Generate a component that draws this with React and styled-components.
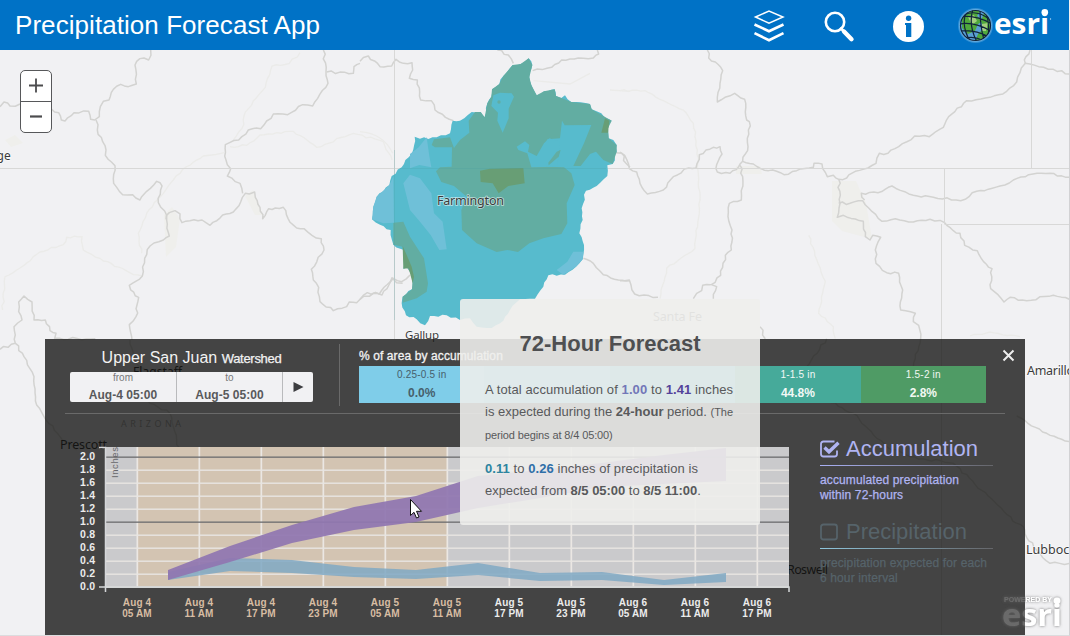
import React from 'react';
import styled, { createGlobalStyle } from 'styled-components';

const Global = createGlobalStyle`
  * { box-sizing: border-box; }
  body { margin: 0; background: #f1f1f3; font-family: "Liberation Sans", Arial, sans-serif; overflow: hidden; }
`;

const Page = styled.div`
  width: 1070px;
  height: 636px;
  display: flex;
  flex-direction: column;
  background: #f1f1f3;
`;
const Header = styled.header`
  height: 50px;
  width: 1069px;
  flex: none;
  display: flex;
  align-items: center;
  padding: 0 17px 0 15px;
  background: #0072c6;
  color: #fff;
`;
const AppTitle = styled.h1`
  margin: 0;
  flex: 1;
  font-size: 26px;
  font-weight: 400;
  line-height: 50px;
  letter-spacing: 0.06px;
  white-space: nowrap;
`;
const Tools = styled.div`
  display: flex;
  align-items: center;
  svg { display: block; }
`;
const Tool = styled.span`
  width: ${p => p.$w}px;
  height: 50px;
`;
const MapArea = styled.main`
  position: relative;
  flex: 1;
  overflow: hidden;
  border-right: 1px solid #d2d2d4;
  border-bottom: 1px solid #dcdcde;
`;
const MapSvg = styled.svg`
  position: absolute;
  left: 0;
  top: 0;
`;
const Zoomer = styled.div`
  position: absolute;
  left: 20px;
  top: 20px;
  width: 32px;
  height: 63px;
  display: flex;
  flex-direction: column;
  border: 1px solid #57585a;
  border-radius: 5px;
  background: #fff;
`;
const ZoomButton = styled.button`
  flex: 1;
  border: 0;
  padding: 0;
  background: none;
  display: flex;
  align-items: center;
  justify-content: center;
  & + & { border-top: 1px solid #57585a; }
`;
const Panel = styled.section`
  position: absolute;
  left: 45px;
  top: 289px;
  width: 980px;
  height: 296px;
  background: rgba(25, 25, 24, 0.8);
  color: #f2f2f2;
  display: flex;
  flex-direction: column;
`;
const PanelTop = styled.div`
  height: 75px;
  margin: 0 20px;
  display: flex;
  border-bottom: 1px solid #6a6a6a;
`;
const Watershed = styled.div`
  width: 275px;
  height: 62px;
  margin-top: 5px;
  padding-left: 5px;
  border-right: 1px solid #6a6a6a;
`;
const WatershedName = styled.h2`
  margin: 0;
  width: 243px;
  height: 28px;
  padding-top: 4px;
  font-size: 16px;
  font-weight: 400;
  line-height: 20px;
  text-align: center;
  white-space: nowrap;
  small { font-size: 13px; letter-spacing: -0.3px; -webkit-text-stroke: 0.25px #f2f2f2; }
`;
const Range = styled.div`
  display: flex;
  width: 243px;
  height: 30px;
  border-radius: 2px;
  background: #f1f1f3;
  overflow: hidden;
`;
const RangeCell = styled.div`
  width: ${p => p.$w}px;
  padding-top: 1px;
  text-align: center;
  font-size: 10px;
  line-height: 10px;
  color: #77787a;
  & + & { border-left: 1px solid #b9babc; }
  b { display: block; font-size: 12px; line-height: 14px; margin-top: 5px; color: #58595b; white-space: nowrap; letter-spacing: 0.05px; }
  svg { display: block; margin: 8px 0 0 10px; }
`;
const Areas = styled.div`
  margin-left: 19px;
  width: 627px;
`;
const AreasTitle = styled.div`
  height: 27px;
  padding-top: 9px;
  font-size: 12px;
  line-height: 16px;
  letter-spacing: 0.1px;
  -webkit-text-stroke: 0.3px #f2f2f2;
`;
const Segments = styled.div`
  display: flex;
  height: 37px;
`;
const Segment = styled.div`
  flex: 1;
  padding-top: 3px;
  background: ${p => p.$bg};
  color: ${p => p.$fg};
  font-size: 10px;
  line-height: 12px;
  text-align: center;
  letter-spacing: 0.2px;
  b { display: block; font-size: 12px; line-height: 14px; margin-top: 5px; letter-spacing: 0; }
`;
const Close = styled.button`
  margin: 10px -10px 0 auto;
  width: 13px;
  height: 13px;
  padding: 0;
  border: 0;
  background: none;
  svg { display: block; }
`;
const PanelBody = styled.div`
  display: flex;
  flex: 1;
`;
const ChartSvg = styled.svg`
  display: block;
  flex: none;
`;
const Legend = styled.div`
  padding-top: 20px;
  margin-left: 19px;
  width: 173px;
`;
const Series = styled.div`
  height: 83px;
  color: ${p => p.$fg};
`;
const SeriesHead = styled.div`
  display: flex;
  align-items: center;
  height: 32px;
  padding-bottom: 2px;
  font-size: 22px;
  gap: 5px;
  background: linear-gradient(90deg, ${p => p.$line}, #65666a) left bottom / 100% 1px no-repeat;
`;
const SeriesNote = styled.div`
  padding-top: 7px;
  font-size: 12px;
  line-height: 15px;
  letter-spacing: 0.12px;
  white-space: nowrap;
  -webkit-text-stroke: 0.25px currentColor;
`;
const Popup = styled.section`
  position: absolute;
  left: 460px;
  top: 249px;
  width: 300px;
  height: 226px;
  padding: 30px 25px 0;
  border-radius: 3px;
  background: rgba(238, 238, 236, 0.895);
  color: #58595b;
`;
const PopupTitle = styled.h2`
  margin: 0 0 22px;
  font-size: 22px;
  line-height: 29px;
  height: 28px;
  font-weight: 700;
  color: #4e4f51;
  text-align: center;
  white-space: nowrap;
`;
const Para = styled.p`
  margin: 0 0 12px;
  font-size: 13px;
  line-height: 22.3px;
`;
const Line = styled.span`
  display: block;
  white-space: nowrap;
  letter-spacing: ${p => p.$ls || 0}px;
  small { font-size: ${p => p.$small || 11}px; }
`;
const Value = styled.b`
  color: ${p => p.$c};
`;
const Pointer = styled.svg`
  position: absolute;
  left: 409px;
  top: 448px;
`;
const Powered = styled.svg`
  position: absolute;
  left: 995px;
  top: 540px;
`;

const road = { fill: 'none', stroke: '#d3d3d1', strokeWidth: 4.5, strokeLinejoin: 'round' };
const faint = { fill: 'none', stroke: '#ebebe9', strokeWidth: 4 };

const ROADS_NW = [
  'M452 150L446 180L432 174L410 184L405 195L409 252L385 260L362 253L340 268L327 300L310 304L301 320L298 350L284 360L272 358L266 334L222 338L195 363L184 360L176 338L155 328',
  'M60 312L30 318L12 306L0 320',
  'M288 360L292 390L308 425L318 450L316 466L345 497L341 550L368 584L398 584L420 600L440 574L470 544L486 558L475 608L494 633L500 660L508 708L490 720L450 738L434 775L427 828L388 856L392 870L416 892L408 950L388 974L396 1020',
  'M498 658L508 638L525 632L540 642L546 668L570 662L606 660L630 676L668 645L700 636L722 606L736 580L748 582L764 576L766 592L780 622L788 656L806 626L826 624L850 622L864 655L890 684L912 686L936 706L964 716L972 750L934 808L940 840L956 862L960 905L1000 932L1040 920L1048 906L1070 908L1102 878L1138 882L1176 833L1190 848L1208 850',
  'M970 150L978 215L984 250L938 318L908 314L863 344L820 342L782 386L745 390L716 420L676 434L678 480L692 506L682 528L720 550L728 580',
  'M980 216L1060 220L1062 200L1080 190',
  'M0 1048L46 1030L42 980L66 960L56 935L56 906L72 888L96 906L102 960L136 960L150 992L168 1000L164 1015L286 1016',
  'M46 1030L72 1070L102 1130L110 1215L132 1250L180 1310L230 1350M390 1020L410 1090L460 1130L440 1200L510 1240L530 1320L550 1400'
];
const ROADS_N = [
  'M0 34L25 18L60 50L95 48L108 28L130 40L156 38L158 60L148 85L172 90L182 150L214 152L225 180L280 212',
  'M412 0L445 15L460 40M518 62L575 52L605 30L655 24L700 24L716 12L712 0',
  'M768 308L785 310L798 340L810 352M670 625L700 640L730 674L775 690L810 692',
  'M0 748L40 730L66 735L100 685L125 695L150 675'
];
const ROADS_E = [
  'M262 0L266 24L286 36L308 62L300 100L292 156L315 142L344 130L374 148L380 210L388 215L384 290L368 334L400 342L422 356L458 360L492 374L530 362L580 352L582 340L606 342L622 380L640 376L656 388L680 384L706 364L744 354L768 340L778 310L804 310L836 290L884 258L928 260L970 232L986 200L1040 152L1110 142L1160 124L1190 96L1204 54L1216 40L1256 50L1300 58L1348 72',
  'M1216 40L1218 20L1230 0M0 306L14 316L28 356L50 366L60 400L82 432L130 420L160 380L206 354L228 354L238 314L280 292L300 290L306 312L290 344L292 366L330 370L356 350L368 334',
  'M360 346L368 380L364 450L328 460L324 500L336 540L334 600L316 616L302 676L274 704L290 710L280 746M272 704L248 706L245 722L230 730L220 746M0 692L28 690L44 732L114 742',
  'M656 388L660 460L652 502L670 496L730 514L736 560L750 570L758 556L782 562L766 600L768 640L800 668L836 670L848 720L842 780L886 790L880 815L896 826L902 866L880 950L860 1020',
  'M656 460L690 460L728 452L746 474L786 514L826 506L880 516L930 508L974 518L1000 542L1020 550L1034 586L1072 602L1090 634L1116 656L1112 716L1152 756L1170 742L1220 752L1300 736L1348 748',
  'M734 450L724 430L774 428L816 408L880 436L940 442L1022 452L1070 424L1140 408L1180 390L1226 374L1290 370L1348 382',
  'M420 830L436 866M1190 1098L1224 1120L1280 1150L1348 1175M1190 1420L1210 1430L1220 1462L1250 1500L1290 1540L1348 1540',
  'M620 866L560 950L600 1040L700 1090L800 1190L870 1220L1000 1240L1190 1420'
];
const FAINT_E = [
  'M0 122L75 122L130 152L190 180L220 220L232 300L240 450L225 595L140 655L120 746',
  'M566 556L594 640L616 694L596 790L640 830L646 866M1050 858L1110 846L1200 860'
];

// Splits each straight run into short steps with small sideways offsets so roads and shores look natural.
function roughen(d, amp) {
  let seed = 7;
  const rand = () => { seed = (seed * 16807) % 2147483647; return seed / 2147483647 - 0.5; };
  return d.split('M').filter(Boolean).map(part => {
    const closed = part.endsWith('Z');
    const pts = part.replace('Z', '').split('L').map(s => s.trim().split(' ').map(Number));
    if (closed) pts.push(pts[0]);
    const out = [pts[0]];
    for (let i = 1; i < pts.length; i++) {
      const [ax, ay] = pts[i - 1];
      const [bx, by] = pts[i];
      const len = Math.hypot(bx - ax, by - ay);
      const n = Math.max(1, Math.round(len / 13));
      for (let k = 1; k <= n; k++) {
        const t = k / n;
        const off = k === n ? 0 : rand() * amp;
        out.push([ax + (bx - ax) * t - ((by - ay) / len) * off, ay + (by - ay) * t + ((bx - ax) / len) * off]);
      }
    }
    return 'M' + out.map(p => p.map(v => v.toFixed(1)).join(' ')).join('L') + (closed ? 'Z' : '');
  }).join('');
}

const BASIN = roughen('M164 260L180 266L230 262L270 250L278 212L300 212L335 186L362 186L374 202L382 160L394 140L396 118L418 102L430 78L458 45L482 42L506 25L517 45L508 82L514 105L530 136L552 124L584 118L588 138L604 144L615 136L634 156L690 162L695 178L724 190L736 205L755 212L744 235L746 265L760 270L770 285L770 305L758 342L742 346L742 378L710 408L678 422L665 475L668 510L658 550L672 585L668 628L648 650L615 674L565 676L550 710L525 746L480 748L450 780L430 812L395 834L350 830L330 805L300 810L260 796L210 798L195 826L170 808L138 796L125 760L128 740L156 718L158 678L146 650L130 656L132 600L100 584L92 540L60 524L36 508L40 470L50 440L88 405L95 378L125 352L146 322L160 298Z', 7);

function BaseMap() {
  return (
    <MapSvg width="1070" height="586" viewBox="0 50 1070 586">
      <path d="M164 215l8-8 8 12-4 28-10 10zM245 196l8-6 10 25 -8 0zM832 181l24 0 10 22 6 36-30-8-10-10zM736 166l24 0 2 8-26 0zM5 140l10-5 8 8-12 4z" fill="#efefec" />
      <g transform="scale(.33333)">
        {['M900 158L868 190L816 198L796 262L736 336L726 385L700 420M690 440L740 436L780 405L830 398L880 394L950 442L1060 400L1150 425L1176 480M672 458L610 468L560 500L520 540L490 580L440 640L415 700L425 760', 'M8 930L15 830L60 804L120 756L190 734L200 712L246 710L250 750L300 775L400 824L427 828'].map(d => <path key={d} d={roughen(d, 7)} {...faint} />)}
        {ROADS_NW.map(d => <path key={d} d={roughen(d, 8)} {...road} />)}
      </g>
      <g transform="translate(360 50) scale(.33333)">
        <path d="M0 245Q70 250 98 310M520 92L630 102L690 70M750 120L810 124" {...faint} />
        {ROADS_N.map(d => <path key={d} d={roughen(d, 8)} {...road} />)}
      </g>
      <g transform="translate(620 50) scale(.33333)">
        {FAINT_E.map(d => <path key={d} d={roughen(d, 6)} {...faint} />)}
        {ROADS_E.map(d => <path key={d} d={roughen(d, 8)} {...road} />)}
      </g>
      <path d="M0 168.5H1069M394.5 50V339M1031.5 50V168M944.5 168V224M944.5 224.5H1069M941.5 224V636" fill="none" stroke="#d8d8d7" />
      <g transform="translate(360 50) scale(.33333)">
        <path fill="#57bbcd" d={BASIN} />
        <g fill="#62ada2">
          <path d="M222 268L270 262L282 294L300 270L328 248L326 212L345 186L362 186L374 202L382 160L394 140L396 118L418 102L430 78L458 45L482 42L506 25L517 45L508 82L514 105L530 136L552 124L584 118L588 138L604 144L634 156L690 162L695 178L755 212L744 235L746 265L770 285L770 305L758 342L730 330L708 305L690 312L662 348L640 348L672 280L694 225L614 226L606 212L600 265L562 268L542 310L552 342L600 300L590 340L560 350L612 352L634 370L644 405L620 460L622 520L604 552L550 565L508 580L474 606L442 600L410 606L350 580L306 540L304 480L320 440L282 408L244 396L228 364L240 352L275 350L276 292L225 292L215 285Z" />
          <path d="M100 518L130 515L150 560L192 625L204 700L200 725L170 745L128 758L128 740L156 718L158 678L132 640L128 590L100 584Z" />
        </g>
        <g fill="#57bbcd">
          <path d="M400 136L420 128L455 130L462 140L446 176L446 205L428 248L412 212L414 188L394 168Z" />
          <path d="M470 290L495 274L508 285L504 305L530 318L552 280L568 265L600 275L592 350L514 352L502 310L475 300Z" />
        </g>
        <path fill="#62ada2" d="M565 338L590 305L602 300L596 320L566 346Z" />
        <path fill="#689e75" d="M360 362L390 356L490 354L494 400L445 408L416 430L398 400L362 396ZM735 205L748 212L744 248L724 248ZM128 588L140 615L155 650L162 680L158 700L146 655L130 656Z" />
        <path fill="#6fc0d8" d="M176 292L200 262L208 318L214 352L178 345L150 355L150 312ZM150 374L180 385L214 430L222 490L248 515L260 598L238 600L212 555L180 515L150 480L130 400ZM100 380L102 518L70 520L36 508L40 470L50 440L88 405ZM640 605L670 605L668 628L648 650L610 674L590 660L622 635Z" />
        <circle cx="417" cy="156" r="5" fill="#62ada2" />
      </g>
      <path d="M394.5 150V320M400 168.5H606" stroke="#4a9aa0" strokeOpacity=".22" />
      <g fontFamily='"Noto Sans", sans-serif' fontSize="12.5" fill="#3b3b3b" lengthAdjust="spacingAndGlyphs">
        <g stroke="#fff" strokeOpacity=".6" strokeWidth="1.6" paintOrder="stroke">
          <text x="437" y="204.500" textLength="67">Farmington</text>
          <text x="405" y="338.500" textLength="34" fontSize="11.5">Gallup</text>
          <text x="-3.500" y="160" fontSize="12">ge</text>
          <text x="1027" y="375" textLength="47">Amarillo</text>
          <text x="1026" y="554" textLength="50">Lubbock</text>
        </g>
        <text x="653" y="321" textLength="49" fill="#777">Santa Fe</text>
        <g fill="#000">
          <text x="133" y="376" textLength="49" fontSize="12">Flagstaff</text>
          <text x="60" y="449" textLength="47">Prescott</text>
          <text x="787" y="574" textLength="41">Roswell</text>
        </g>
        <text x="121" y="427" textLength="60" fontSize="9" fill="#999">ARIZONA</text>
      </g>
    </MapSvg>
  );
}

function Globe() {
  return (
    <svg width="94" height="50" viewBox="958 0 94 50">
      <defs>
        <clipPath id="globe"><circle cx="975.500" cy="25.500" r="15" /></clipPath>
        <radialGradient id="glow"><stop offset=".8" stopColor="#a9d4f2" /><stop offset="1" stopColor="#a9d4f2" stopOpacity="0" /></radialGradient>
      </defs>
      <circle cx="975.500" cy="25.500" r="18" fill="url(#glow)" />
      <g clipPath="url(#globe)">
        <rect x="958" y="8" width="36" height="36" fill="#5a9fd4" />
        <path d="M962 18l9-8 9 1-3 5 6 5-5 3-3 7-7 3-6-6zM984 13l7 9 0 10-6 8-10 2 3-8 5-5-2-8z" fill="#4fa83c" />
        <path d="M968 17l6-2 3 6-5 4zM982 24l6-1-2 8-4 0z" fill="#c8df9a" fillOpacity=".7" />
        <path d="M959 17Q975 14 992 24M959 24Q974 21 991 31M960 31Q974 29 989 37M966 38Q975 36 984 41M966 12Q961 26 970 41M973 9Q968 25 977 42M980 9Q980 26 984 40M986 12Q990 25 988 36M964 15Q976 9 989 19" fill="none" stroke="#10233a" strokeWidth="1.200" />
      </g>
      <circle cx="975.500" cy="25.500" r="15" fill="none" stroke="#10233a" strokeWidth="1.200" />
      <text x="994" y="34.300" textLength="55" lengthAdjust="spacingAndGlyphs" fontFamily='"Open Sans", sans-serif' fontWeight="700" fontSize="29" fill="#fff">esri</text>
      <circle cx="1044.800" cy="12.300" r="3.300" fill="#fff" />
      <circle cx="1050.500" cy="19" r=".7" fill="#b9ddf5" />
    </svg>
  );
}

const TIMES = [['Aug 4', '05 AM'], ['Aug 4', '11 AM'], ['Aug 4', '17 PM'], ['Aug 4', '23 PM'], ['Aug 5', '05 AM'], ['Aug 5', '11 AM'], ['Aug 5', '17 PM'], ['Aug 5', '23 PM'], ['Aug 6', '05 AM'], ['Aug 6', '11 AM'], ['Aug 6', '17 PM']];
const band = (up, low) => [...up.map((y, i) => `${168 + i * 62},${y}`), ...low.map((y, i) => `${168 + i * 62},${y}`).reverse()].join(' ');
const ACCUM = band([570, 546, 525, 507, 496, 476, 470, 463, 455, 448], [580, 562, 543, 530, 522, 508, 498, 487, 484, 481]);
const PRECIP = band([572, 558, 560, 567, 570, 563, 573, 572, 580, 573], [580, 571, 573, 577, 579, 575, 581, 580, 585, 582]);

function Chart() {
  return (
    <ChartSvg width="756" height="221" viewBox="45 414 756 221">
      <rect x="105" y="447" width="684" height="140" fill="#cacacc" />
      <rect x="137" y="447" width="310" height="140" fill="#d3c4b2" />
      {TIMES.map((_, i) => <rect key={i} x={136.500 + i * 62} y="447" width="1.700" height="140" fill="#ebe7e3" />)}
      {[...Array(11)].map((_, i) => {
        const major = i === 5 || i === 10;
        const y = Math.round(586.500 - i * 13) - (major ? 0 : 0.5);
        return <rect key={i} x="105" y={major ? y - 0.5 : y} width="684" height={major ? 1.3 : 1.4} fill={major ? '#6b6c6e' : '#e8e5e2'} />;
      })}
      <polygon points={PRECIP} fill="#7ea8c3" fillOpacity=".84" />
      <polygon points={ACCUM} fill="#9076b0" fillOpacity=".93" />
      <path d="M99 587H789V592M105.500 592V447.500H99" fill="none" stroke="#d5d7d9" strokeWidth="1.500" />
      <g fontFamily='"Liberation Sans", Arial, sans-serif' fontSize="10" fontWeight="700" letterSpacing=".1">
        {[...Array(11)].map((_, i) => <text key={i} x="95.500" y={590 - i * 13} textAnchor="end" fill="#ececec" fontSize="10.500" letterSpacing=".3">{(i * 0.2).toFixed(1)}</text>)}
        {TIMES.map(([d, t], i) => (
          <g key={i} fill={i < 6 ? '#d8bda3' : '#ececec'} textAnchor="middle">
            <text x={137 + i * 62} y="606">{d}</text>
            <text x={137 + i * 62} y="617">{t}</text>
          </g>
        ))}
      </g>
      <text transform="translate(118 478) rotate(-90)" fontFamily='"Liberation Sans", sans-serif' fontSize="9.500" textLength="31" fill="#66676a">Inches</text>
    </ChartSvg>
  );
}

function Check({ on }) {
  return (
    <svg width="21" height="20" viewBox="0 0 21 20">
      <path d={on ? 'M17 11.500V15Q17 17.500 14.500 17.500H3.500Q1 17.500 1 15V5Q1 2.500 3.500 2.500H14.500' : 'M3.500 2.500H14.500Q17 2.500 17 5V15Q17 17.500 14.500 17.500H3.500Q1 17.500 1 15V5Q1 2.500 3.500 2.500Z'} fill="none" stroke="currentColor" strokeWidth="1.800" />
      {on && <path d="M4.500 8.500L9 12.800L18.500 3.800" fill="none" stroke="currentColor" strokeWidth="3.400" />}
    </svg>
  );
}

export default function App() {
  return (
    <Page>
      <Global />
      <Header>
        <AppTitle>Precipitation Forecast App</AppTitle>
        <Tools>
          <Tool $w={70}>
            <svg width="34" height="50" viewBox="752 0 34 50" fill="none" stroke="#fff">
              <path d="M755.500 17L769 11L783 17L769 23.200Z" strokeWidth="1.500" />
              <path d="M754.500 24.500L769 31.200L783.500 24.500M754.500 33.200L769 40.200L783.500 33.200" strokeWidth="2.600" />
            </svg>
          </Tool>
          <Tool $w={69}>
            <svg width="34" height="50" viewBox="822 0 34 50" fill="none" stroke="#fff" strokeLinecap="round">
              <circle cx="835" cy="22" r="9.200" strokeWidth="2.600" />
              <path d="M844 31.500L851.500 39.200" strokeWidth="4.400" />
              <path d="M841 28.500L845 32.500" strokeWidth="2.800" />
            </svg>
          </Tool>
          <Tool $w={67}>
            <svg width="34" height="50" viewBox="891 0 34 50">
              <circle cx="908.500" cy="26.500" r="15.500" fill="#fff" />
              <path d="M905 23H911.300V37H906V25H905Z" fill="#0072c6" />
              <circle cx="908.600" cy="18.300" r="2.700" fill="#0072c6" />
            </svg>
          </Tool>
          <Globe />
        </Tools>
      </Header>
      <MapArea>
        <BaseMap />
        <Zoomer>
          <ZoomButton aria-label="Zoom in"><svg width="16" height="16" viewBox="0 0 16 16"><path d="M1 7.500H15M8 .5V14.500" stroke="#4c4c4e" strokeWidth="1.800" /></svg></ZoomButton>
          <ZoomButton aria-label="Zoom out"><svg width="16" height="16" viewBox="0 0 16 16"><path d="M2 7.500H14" stroke="#4c4c4e" strokeWidth="2.200" /></svg></ZoomButton>
        </Zoomer>
        <Panel>
          <PanelTop>
            <Watershed>
              <WatershedName>Upper San Juan <small>Watershed</small></WatershedName>
              <Range>
                <RangeCell $w={106}>from<b>Aug-4 05:00</b></RangeCell>
                <RangeCell $w={106}>to<b>Aug-5 05:00</b></RangeCell>
                <RangeCell $w={31}><svg width="11" height="12" viewBox="0 0 11 12"><path d="M.5 1L10.500 6L.5 11Z" fill="#3c3d40" /></svg></RangeCell>
              </Range>
            </Watershed>
            <Areas>
              <AreasTitle>% of area by accumulation</AreasTitle>
              <Segments>
                <Segment $bg="#7fcde9" $fg="#46606c">0.25-0.5 in<b>0.0%</b></Segment>
                <Segment $bg="#6cc4dc" $fg="#7fcde9" />
                <Segment $bg="#5bbcd0" $fg="#7fcde9" />
                <Segment $bg="#46aa9a" $fg="#f2f8f6">1-1.5 in<b>44.8%</b></Segment>
                <Segment $bg="#4f9b65" $fg="#f2f8f2">1.5-2 in<b>2.8%</b></Segment>
              </Segments>
            </Areas>
            <Close aria-label="Close"><svg width="13" height="13" viewBox="0 0 13 13"><path d="M1.500 1.500L11.500 11.500M11.500 1.500L1.500 11.500" stroke="#ededed" strokeWidth="2" /></svg></Close>
          </PanelTop>
          <PanelBody>
            <Chart />
            <Legend>
              <Series $fg="#b0b4f2">
                <SeriesHead $line="#a9b0f5"><Check on />Accumulation</SeriesHead>
                <SeriesNote>accumulated precipitation<br />within 72-hours</SeriesNote>
              </Series>
              <Series $fg="#56636a">
                <SeriesHead $line="#8fc6dd"><Check />Precipitation</SeriesHead>
                <SeriesNote>precipitation expected for each<br />6 hour interval</SeriesNote>
              </Series>
            </Legend>
          </PanelBody>
        </Panel>
        <Popup>
          <PopupTitle>72-Hour Forecast</PopupTitle>
          <Para>
            <Line $ls={0.09}>A total accumulation of <Value $c="#7277b8">1.00</Value> to <Value $c="#54429a">1.41</Value> inches</Line>
            <Line>is expected during the <b>24-hour</b> period. <small>(The</small></Line>
            <Line $ls={-0.12}><small>period begins at 8/4 05:00)</small></Line>
          </Para>
          <Para>
            <Line $ls={0.07}><Value $c="#2d84a0">0.11</Value> to <Value $c="#2f6fa8">0.26</Value> inches of precipitation is</Line>
            <Line $ls={-0.03}>expected from <b>8/5 05:00</b> to <b>8/5 11:00</b>.</Line>
          </Para>
        </Popup>
        <Pointer width="14" height="22" viewBox="0 0 14 22"><path d="M1.500 1.500V17.500L5 14.300L7.500 20L10 19L7.500 13.300H12.500Z" fill="#fff" stroke="#111" strokeWidth="1" /></Pointer>
        <Powered width="74" height="45" viewBox="995 590 74 45">
          <defs>
            <linearGradient id="ink" gradientUnits="userSpaceOnUse" x1="1002" x2="1062" y1="0" y2="0">
              <stop offset=".383" stopColor="#6b6b6b" /><stop offset=".383" stopColor="#fff" />
            </linearGradient>
            <filter id="soft" x="-20%" y="-30%" width="140%" height="160%"><feDropShadow dx="0" dy="0" stdDeviation="1.800" floodColor="#666" floodOpacity=".95" /></filter>
          </defs>
          <g fill="url(#ink)" filter="url(#soft)">
            <text x="1004" y="602" textLength="48" lengthAdjust="spacingAndGlyphs" fontFamily='"Liberation Sans", sans-serif' fontWeight="700" fontSize="6.500">POWERED BY</text>
            <text x="1002" y="625.500" textLength="60" lengthAdjust="spacingAndGlyphs" fontFamily='"Open Sans", sans-serif' fontWeight="700" fontSize="31">esri</text>
            <circle cx="1057" cy="600.800" r="3.400" />
          </g>
        </Powered>
      </MapArea>
    </Page>
  );
}
